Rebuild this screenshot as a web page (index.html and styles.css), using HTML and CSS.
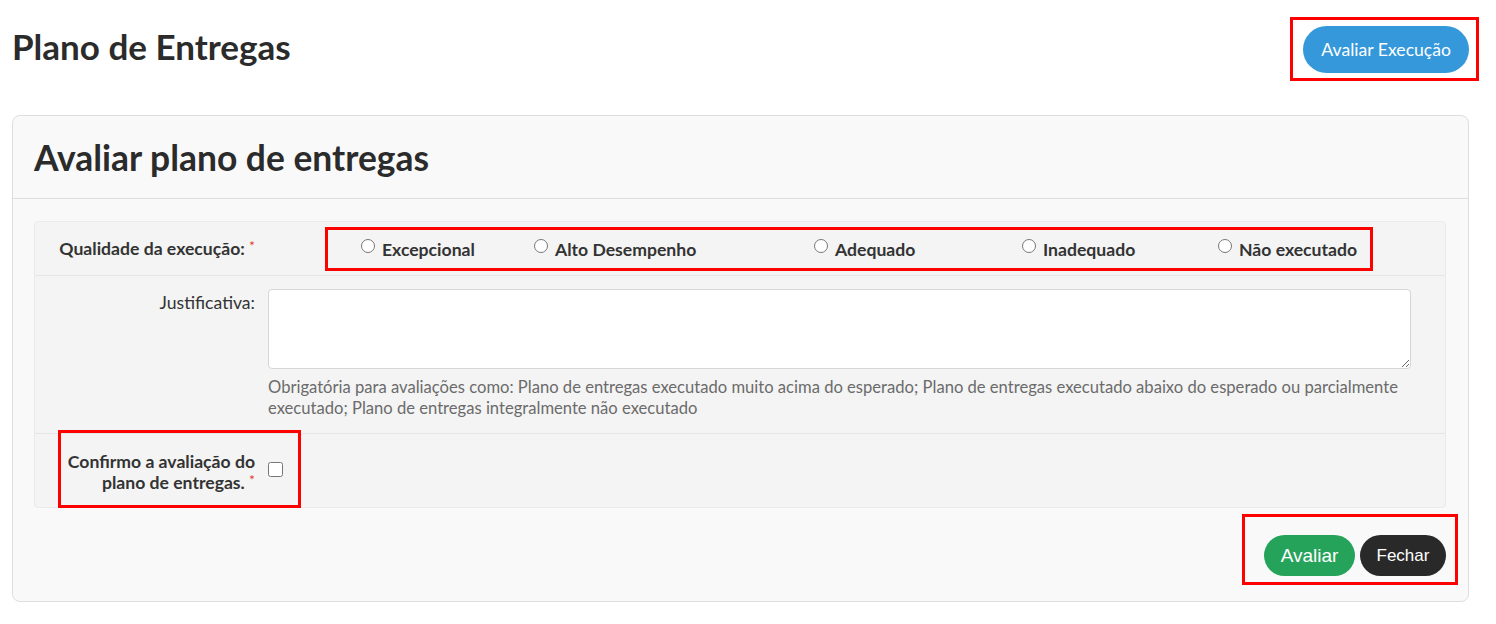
FILE: index.html
```html
<!DOCTYPE html>
<html lang="pt-BR">
<head>
  <meta charset="UTF-8">
  <meta name="viewport" content="width=device-width, initial-scale=1">
  <title>Plano de Entregas</title>
  <link rel="stylesheet" href="styles.css">
</head>
<body>
  <div class="page">
    <div class="page-head">
      <h1>Plano de Entregas</h1>
      <div class="marked-wrap">
        <button class="btn btn-blue">Avaliar Execução</button>
        <span class="hl hl-top"></span>
      </div>
    </div>

    <div class="card">
      <div class="card-head">
        <h2>Avaliar plano de entregas</h2>
      </div>

      <div class="card-body">
        <div class="form-box">
          <div class="row row-radio">
            <label class="lbl bold">Qualidade da execução: <span class="req">*</span></label>
            <div class="radios">
              <label class="radio"><input type="radio" name="q"> Excepcional</label>
              <label class="radio"><input type="radio" name="q"> Alto Desempenho</label>
              <label class="radio"><input type="radio" name="q"> Adequado</label>
              <label class="radio"><input type="radio" name="q"> Inadequado</label>
              <label class="radio"><input type="radio" name="q"> Não executado</label>
            </div>
          </div>

          <div class="row row-just">
            <label class="lbl">Justificativa:</label>
            <div class="field">
              <textarea></textarea>
              <p class="help">Obrigatória para avaliações como: Plano de entregas executado muito acima do esperado; Plano de entregas executado abaixo do esperado ou parcialmente executado; Plano de entregas integralmente não executado</p>
            </div>
          </div>

          <div class="row row-check">
            <label class="lbl bold">Confirmo a avaliação do plano de entregas. <span class="req">*</span></label>
            <div class="field"><input type="checkbox" class="check"></div>
            <span class="hl hl-check"></span>
          </div>
        </div>

        <div class="card-foot">
          <div class="marked-wrap">
            <button class="btn btn-green">Avaliar</button>
            <button class="btn btn-dark">Fechar</button>
            <span class="hl hl-foot"></span>
          </div>
        </div>
      </div>
    </div>
  </div>
</body>
</html>
```

FILE: styles.css
```css
body {
  margin: 0;
  font-family: Lato, "Open Sans", Arial, sans-serif;
  color: #2b2b2b;
  background: #fff;
}

.page {
  padding: 0 27px 0 12px;
}

.page-head {
  display: flex;
  justify-content: space-between;
  align-items: center;
  padding-top: 26px;
  height: 47px;
}

h1 {
  margin: 0;
  font-size: 35px;
  font-weight: 700;
  line-height: 40px;
  margin-top: -8px;
}

.marked-wrap {
  position: relative;
  display: flex;
  gap: 5px;
}

.hl {
  position: absolute;
  border: 3px solid #f00;
  pointer-events: none;
}

.hl-top {
  left: -13px;
  right: -10px;
  top: -9px;
  bottom: -8px;
}

.btn {
  border: none;
  border-radius: 999px;
  color: #fff;
  cursor: pointer;
  padding: 0 16px;
}

.btn-blue {
  height: 47px;
  padding: 0 18px;
  background: #3498db;
  font-family: Lato, sans-serif;
  font-size: 17.6px;
}

.btn-green {
  height: 41px;
  width: 91px;
  background: #26a35b;
  font-family: "Liberation Sans", Arial, sans-serif;
  font-size: 19px;
}

.btn-dark {
  height: 41px;
  width: 86px;
  background: #292929;
  font-family: "Liberation Sans", Arial, sans-serif;
  font-size: 17px;
}

.card {
  margin-top: 42px;
  border: 1px solid #dedede;
  border-radius: 8px;
  background: #f9f9f9;
}

.card-head {
  height: 82px;
  display: flex;
  align-items: center;
  padding: 0 21px;
  border-bottom: 1px solid #dedede;
}

h2 {
  margin: 0;
  font-size: 35.4px;
  font-weight: 700;
}

.card-body {
  padding: 22px 22px 25px 21px;
}

.form-box {
  background: #f4f4f4;
  border: 1px solid #ebebeb;
  border-radius: 4px;
}

.row {
  position: relative;
  display: grid;
  grid-template-columns: 233px 1fr;
  padding-right: 34px;
  border-bottom: 1px solid #e6e6e6;
}

.row:last-child {
  border-bottom: none;
}

.lbl {
  text-align: right;
  padding-right: 13px;
  font-size: 17.6px;
  color: #333;
}

.bold {
  font-weight: 700;
}

.req {
  color: #e03b3b;
  font-weight: 400;
  font-size: 14px;
  line-height: 1;
  position: relative;
  top: -4px;
}

.row-radio {
  height: 53px;
  align-items: center;
}

.radios {
  box-sizing: border-box;
  width: 1048px;
  margin-left: 57px;
  height: 44px;
  border: 3px solid #f00;
  display: grid;
  grid-template-columns: 173px 280px 208px 196px auto;
  align-items: center;
  padding-left: 33px;
  padding-top: 1px;
}

.radio {
  font-size: 17.6px;
  font-weight: 700;
  color: #333;
  display: flex;
  align-items: center;
  white-space: nowrap;
}

.radio input {
  margin: -6px 7px 0 0;
  width: 14px;
  height: 14px;
}

.row-just {
  padding-top: 13px;
  padding-bottom: 14px;
}

.row-just .lbl {
  padding-top: 3px;
}

textarea {
  display: block;
  box-sizing: border-box;
  width: 100%;
  height: 80px;
  border: 1px solid #d6d6d6;
  border-radius: 4px;
  background: #fff;
  resize: vertical;
}

.help {
  margin: 8px -12px 0 0;
  font-size: 16.6px;
  line-height: 21px;
  color: #6b6b6b;
}

.row-check {
  height: 73px;
  align-items: center;
}

.row-check .lbl {
  line-height: 21px;
  padding-left: 20px;
  margin-top: 3px;
}

.check {
  margin: -6px 0 0 0;
  width: 15px;
  height: 15px;
}

.hl-check {
  left: 23px;
  width: 237px;
  top: -4px;
  bottom: -1px;
}

.card-foot {
  display: flex;
  justify-content: flex-end;
  padding-top: 27px;
}

.hl-foot {
  left: -22px;
  right: -12px;
  top: -21px;
  bottom: -9px;
}
```
